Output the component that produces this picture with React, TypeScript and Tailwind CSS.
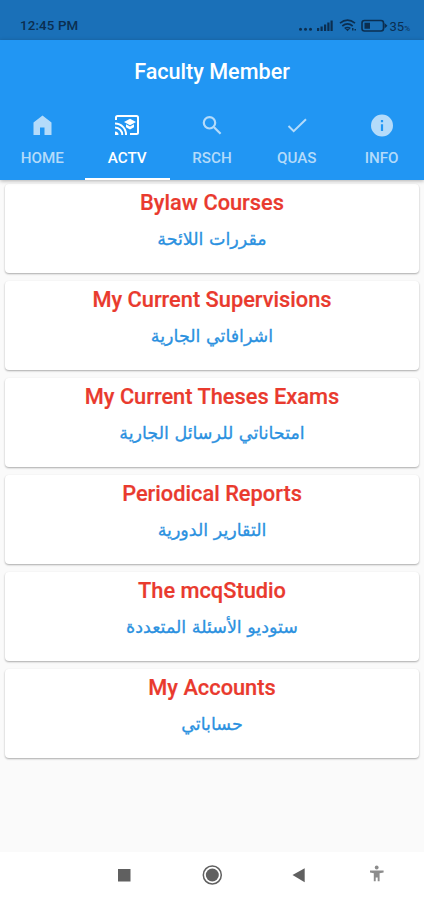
import React from 'react';

const cards = [
  { en: 'Bylaw Courses', ar: 'مقررات اللائحة' },
  { en: 'My Current Supervisions', ar: 'اشرافاتي الجارية' },
  { en: 'My Current Theses Exams', ar: 'امتحاناتي للرسائل الجارية' },
  { en: 'Periodical Reports', ar: 'التقارير الدورية' },
  { en: 'The mcqStudio', ar: 'ستوديو الأسئلة المتعددة' },
  { en: 'My Accounts', ar: 'حساباتي' },
];

function HomeIcon() {
  return (
    <svg width="26" height="26" viewBox="0 0 26 26" fill="currentColor">
      <path d="M13.500 3.500 4.500 10.500v12.500h6.500v-7.500h4.500v7.500H22.500V10.500z" />
    </svg>
  );
}

function CastIcon() {
  return (
    <svg width="28" height="28" viewBox="0 0 28 28" fill="none" stroke="currentColor" strokeWidth="2">
      <path d="M3 9V6.500Q3 5 4.500 5h19Q25 5 25 6.500v15q0 1.500-1.500 1.500H17" />
      <path d="M2 12.500A11 11 0 0 1 13 24M2 16.500A7.300 7.300 0 0 1 9.300 24" />
      <path d="M2 20.500A3.500 3.500 0 0 1 5.500 24H2z" fill="currentColor" stroke="none" />
      <path d="m11 11 6-3.300 6 3.300-6 3.300zM13 13.200l4 2.300 4-2.300v3L17 18.500l-4-2.300z" fill="currentColor" stroke="none" />
    </svg>
  );
}

function SearchIcon() {
  return (
    <svg width="26" height="26" viewBox="0 0 26 26" fill="none" stroke="currentColor" strokeWidth="2.200">
      <circle cx="10.500" cy="10.800" r="5.700" />
      <path d="m15 15.200 6.600 6.600" />
    </svg>
  );
}

function CheckIcon() {
  return (
    <svg width="26" height="26" viewBox="0 0 26 26" fill="none" stroke="currentColor" strokeWidth="2">
      <path d="m4.500 14 5.200 5.200L22 7.200" />
    </svg>
  );
}

function InfoIcon() {
  return (
    <svg width="26" height="26" viewBox="0 0 26 26" fill="currentColor">
      <path fillRule="evenodd" d="M13 2.500a11 11 0 1 0 0 22 11 11 0 0 0 0-22zm-1.100 5.500h2.200v2.200h-2.200zm0 4.300h2.200v6.700h-2.200z" />
    </svg>
  );
}

const tabs = [
  { label: 'HOME', Icon: HomeIcon },
  { label: 'ACTV', Icon: CastIcon },
  { label: 'RSCH', Icon: SearchIcon },
  { label: 'QUAS', Icon: CheckIcon },
  { label: 'INFO', Icon: InfoIcon },
];

function StatusBar() {
  return (
    <div className="flex h-[40px] items-center justify-between bg-[#1a70b8] pt-[12px] pr-[14px] pl-[20px] text-[#0b2e50]">
      <span className="text-[13.300px] font-medium tracking-[0.150px]">12:45 PM</span>
      <div className="flex items-center">
        <svg width="90" height="16" viewBox="0 0 90 16" fill="currentColor">
          <circle cx="2.500" cy="11.300" r="1.500" />
          <circle cx="7.500" cy="11.300" r="1.500" />
          <circle cx="12.500" cy="11.300" r="1.500" />
          <path d="M19 10h2.200v3H19zM22.500 8.500h2.200V13h-2.200zM26 6.500h2.200V13H26zM29.300 4.500h2.200V13h-2.200zM32.500 2.500h2.200V13h-2.200z" />
          <g fill="none" stroke="currentColor" strokeWidth="1.700">
            <path d="M42 5.200q7.500-6 15 0M44.300 8q5.200-4.200 10.400 0M46.700 10.500q2.800-2 5.600 0" />
          </g>
          <path d="m47.500 11 2 2.200 2-2.200zM54 10h1.500v2.500H54zM56.500 11H58v1.500h-1.500z" />
          <rect x="64" y="2.500" width="21.500" height="10.500" rx="2.500" fill="none" stroke="currentColor" strokeWidth="1.600" />
          <path d="M66.500 4.800H72v6h-5.500zM86.500 5l3 2.700-3 2.700z" />
        </svg>
        <span className="ml-[2px] text-[13px] leading-none">35</span>
        <span className="mt-[5px] text-[8px] leading-none">%</span>
      </div>
    </div>
  );
}

export default function App() {
  return (
    <div className="flex h-[900px] w-[424px] flex-col overflow-hidden bg-[#fafafa] font-['Roboto',sans-serif]">
      <StatusBar />
      <header className="z-10 shrink-0 bg-[#2196f3] shadow-[0_1px_4px_rgba(0,0,0,0.3)]">
        <h1 className="flex h-[62px] items-center justify-center pt-[2px] text-[21.600px] font-medium text-white">Faculty Member</h1>
        <nav className="flex h-[78px]">
          {tabs.map(({ label, Icon }, i) => (
            <div
              key={label}
              className={
                i === 1
                  ? 'flex flex-1 flex-col items-center border-b-2 border-white pt-[9px] text-white'
                  : 'flex flex-1 flex-col items-center border-b-2 border-transparent pt-[9px] text-[#b4dbfa]'
              }
            >
              <div className="flex h-[28px] items-center">
                <Icon />
              </div>
              <span className="mt-[9px] text-[15.200px] leading-[21px] font-medium">{label}</span>
            </div>
          ))}
        </nav>
      </header>
      <main className="flex flex-1 flex-col gap-[8px] px-[5px] pt-[4px]">
        {cards.map((c) => (
          <section
            key={c.en}
            className="flex h-[89px] flex-col items-center rounded-[4px] bg-white pt-[6px] shadow-[0_1px_2px_rgba(0,0,0,0.32)]"
          >
            <h2 className="text-[21.800px] leading-[26px] font-medium text-[#e93a2e] [-webkit-text-stroke:0.2px_#e93a2e]">{c.en}</h2>
            <p
              dir="rtl"
              lang="ar"
              className="mt-[10px] font-['DejaVu_Sans',sans-serif] text-[17.500px] leading-[26px] whitespace-nowrap text-[#2b91e0] [-webkit-text-stroke:0.3px_#2b91e0]"
            >
              {c.ar}
            </p>
          </section>
        ))}
      </main>
      <footer className="h-[48px] shrink-0 bg-white">
        <svg width="424" height="48" viewBox="0 0 424 48" fill="#606060">
          <rect x="118" y="17" width="12.500" height="12.500" />
          <circle cx="212.300" cy="23" r="9" fill="none" stroke="#606060" strokeWidth="1.500" />
          <circle cx="212.300" cy="23" r="6.500" />
          <path d="M292.500 23 304.700 16.200v14z" />
          <g fill="#8c8c8c">
            <circle cx="376.700" cy="15.500" r="1.900" />
            <path d="M370 18.500h13.600v1.900l-4 .8v8h-1.900v-3.700h-2v3.700h-1.900v-8l-3.800-.8z" />
          </g>
        </svg>
      </footer>
    </div>
  );
}
